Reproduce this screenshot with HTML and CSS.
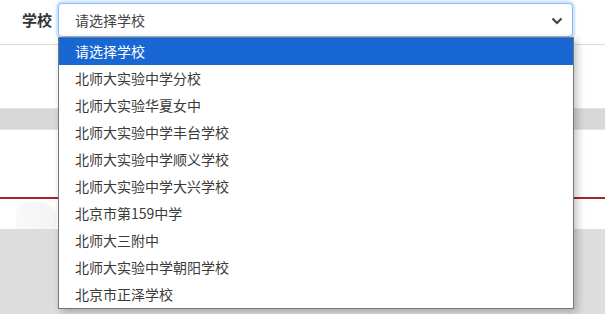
FILE: index.html
```html
<!DOCTYPE html>
<html lang="zh-CN">
<head>
<meta charset="utf-8">
<link rel="stylesheet" href="styles.css">
</head>
<body>
<div class="page">
  <header class="topbar">
    <label class="label">学校</label>
    <div class="select">
      <span class="select-text">请选择学校</span>
      <svg class="chevron" width="12" height="8" viewBox="0 0 12 8"><path d="M1.5 1.5 L6 6 L10.5 1.5" fill="none" stroke="#444" stroke-width="2.2"/></svg>
    </div>
  </header>
  <div class="spacer1"></div>
  <div class="band"></div>
  <div class="spacer2"></div>
  <div class="redline"></div>
  <div class="spacer3"><div class="ghost"></div></div>
  <div class="footer"></div>

  <ul class="dropdown">
    <li class="opt active">请选择学校</li>
    <li class="opt">北师大实验中学分校</li>
    <li class="opt">北师大实验华夏女中</li>
    <li class="opt">北师大实验中学丰台学校</li>
    <li class="opt">北师大实验中学顺义学校</li>
    <li class="opt">北师大实验中学大兴学校</li>
    <li class="opt">北京市第159中学</li>
    <li class="opt">北师大三附中</li>
    <li class="opt">北师大实验中学朝阳学校</li>
    <li class="opt">北京市正泽学校</li>
  </ul>
</div>
</body>
</html>
```
FILE: styles.css
```css
* { box-sizing: border-box; }
html, body { margin: 0; padding: 0; }
body {
  font-family: "Noto Sans CJK SC", "Noto Sans", sans-serif;
  font-size: 14px;
  color: #333;
  background: #ddd;
  width: 605px;
  height: 314px;
  overflow: hidden;
}
.page { position: relative; width: 605px; height: 314px; }
.topbar {
  height: 45px;
  background: #fff;
  border-bottom: 1px solid #dcdcdc;
  display: flex;
  align-items: flex-start;
  padding: 3px 0 0 22px;
}
.label {
  font-weight: bold;
  font-size: 15px;
  line-height: 20px;
  margin-top: 7px;
  width: 36px;
  color: #333;
}
.select {
  width: 515px;
  height: 34px;
  border: 1px solid #80bdff;
  border-radius: 4px;
  box-shadow: 0 0 0 0.15rem rgba(0,123,255,0.15), 0 0 6px rgba(0,0,0,0.06);
  background: #fff;
  display: flex;
  align-items: center;
  justify-content: space-between;
  padding: 0 9px 0 16px;
}
.select-text { font-size: 14px; color: #444; line-height: 20px; }
.chevron { margin-top: 1px; }
.spacer1 { height: 63px; background: #fff; }
.band {
  height: 22px;
  background: #d8d8d8;
  border-top: 1px solid #e4e4e4;
  border-bottom: 1px solid #e4e4e4;
}
.spacer2 { height: 67px; background: #fff; }
.redline { height: 2px; background: #a3262a; }
.spacer3 { height: 30px; background: #fff; position: relative; }
.ghost {
  position: absolute;
  left: 16px; top: 3px;
  width: 40px; height: 27px;
  border-radius: 12px 16px 4px 4px;
  background: linear-gradient(90deg, #f7f7f7, #f3f1f1);
  opacity: 0.8;
}
.footer { height: 100px; background: #ddd; }
.dropdown {
  position: absolute;
  left: 58px;
  top: 37px;
  width: 516px;
  margin: 0;
  padding: 0;
  list-style: none;
  background: #fff;
  border: 1px solid #767676;
  box-shadow: 3px 3px 8px rgba(0,0,0,0.25);
}
.opt {
  height: 27px;
  line-height: 27px;
  padding-left: 16px;
  font-size: 14px;
  color: #3a3a3a;
}
.opt.active { background: #1967d2; color: #fff; }
```
